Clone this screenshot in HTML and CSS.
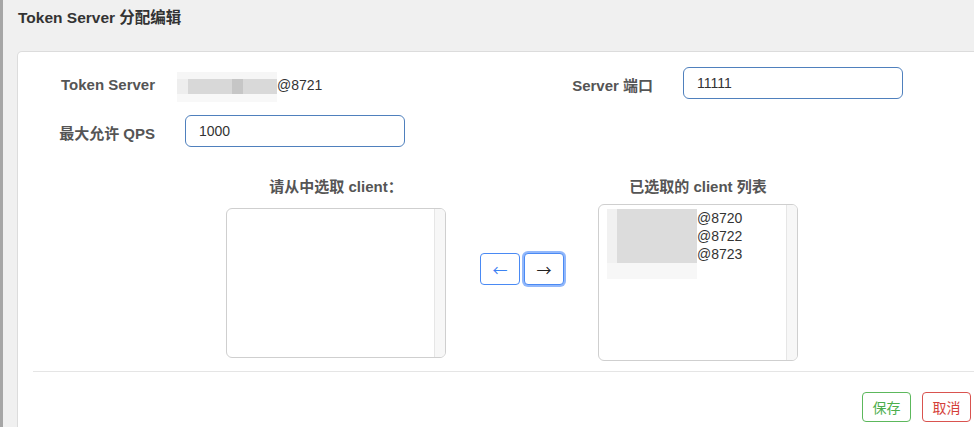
FILE: index.html
```html
<!DOCTYPE html>
<html lang="zh-CN">
<head>
<meta charset="utf-8">
<title>Token Server 分配编辑</title>
<link rel="stylesheet" href="styles.css">
</head>
<body>
<div class="page">
  <div class="header">Token Server 分配编辑</div>
  <div class="card">
    <div class="form">
      <div class="row">
        <div class="half">
          <label class="label">Token Server</label>
          <div class="value"><span class="blur"></span>@8721</div>
        </div>
        <div class="half">
          <label class="label">Server 端口</label>
          <input class="input" type="text" value="11111">
        </div>
      </div>
      <div class="row">
        <div class="half">
          <label class="label">最大允许 QPS</label>
          <input class="input" type="text" value="1000">
        </div>
      </div>
    </div>

    <div class="transfer">
      <div class="col col-left">
        <div class="col-title">请从中选取 client：</div>
        <div class="box box-left">
          <div class="box-body"></div>
          <div class="track"></div>
        </div>
      </div>
      <div class="arrows">
        <button class="arrow arrow-left">←</button>
        <button class="arrow arrow-right">→</button>
      </div>
      <div class="col col-right">
        <div class="col-title">已选取的 client 列表</div>
        <div class="box box-right">
          <ul class="box-body list">
            <li class="item"><span class="mask"></span>@8720</li>
            <li class="item"><span class="mask"></span>@8722</li>
            <li class="item"><span class="mask"></span>@8723</li>
            <li class="mask-tail"></li>
          </ul>
          <div class="track"></div>
        </div>
      </div>
    </div>

    <div class="divider"></div>

    <div class="footer">
      <button class="btn btn-save">保存</button>
      <button class="btn btn-cancel">取消</button>
    </div>
  </div>
</div>
</body>
</html>
```

FILE: styles.css
```css
* { box-sizing: border-box; }

html, body {
  margin: 0;
  padding: 0;
  height: 427px;
  overflow: hidden;
}

body {
  background: #f0f0f0;
  font-family: "Liberation Sans", "Noto Sans CJK SC", sans-serif;
  color: #333;
}

.page {
  border-left: 3px solid #a6a6a6;
  height: 427px;
}

.header {
  height: 36px;
  line-height: 36px;
  padding-left: 15px;
  font-size: 15.5px;
  font-weight: bold;
  color: #333;
}

.card {
  margin-top: 15px;
  margin-left: 14px;
  width: 1000px;
  height: 376px;
  background: #fff;
  border: 1px solid #dcdcdc;
  border-bottom: none;
  border-radius: 5px 5px 0 0;
}

.form {
  padding-top: 15px;
  display: flex;
  flex-direction: column;
  gap: 16px;
}

.row {
  display: flex;
  height: 32px;
  align-items: center;
}

.half {
  width: 498px;
  display: flex;
  align-items: center;
  gap: 30px;
}

.label {
  width: 137px;
  text-align: right;
  font-size: 15px;
  font-weight: bold;
  color: #555;
  padding-top: 2px;
}

.value {
  display: flex;
  align-items: center;
  font-size: 14px;
  color: #333;
  padding-top: 4px;
}

.blur {
  display: inline-block;
  width: 100px;
  height: 30px;
  margin-left: -8px;
  margin-top: 3px;
  background:
    linear-gradient(#f6f6f6 0 7px, transparent 7px 22px, #f8f8f8 22px 30px),
    linear-gradient(to right, #eeeeee 0 11px, #d8d8d8 11px 55px, #c6c6c6 55px 66px, #d9d9d9 66px 100px);
}

.input {
  width: 220px;
  height: 32px;
  border: 1px solid #4f80bd;
  border-radius: 6px;
  padding: 0 13px;
  font-family: "Liberation Sans", "Noto Sans CJK SC", sans-serif;
  font-size: 14px;
  color: #333;
  background: #fff;
  outline: none;
}

.transfer {
  display: flex;
  align-items: flex-start;
  margin-top: 30px;
  padding-left: 208px;
}

.col-title {
  text-align: center;
  font-size: 15px;
  font-weight: bold;
  color: #555;
  line-height: 20px;
  white-space: nowrap;
}

.col-left { width: 220px; }
.col-left .col-title { margin-bottom: 11px; }

.col-right {
  width: 200px;
  margin-left: 34px;
}
.col-right .col-title { margin-bottom: 7px; }

.box {
  display: flex;
  border: 1px solid #cfcfcf;
  border-radius: 6px;
  overflow: hidden;
  background: #fff;
}

.box-left { height: 150px; }
.box-right { height: 157px; }

.box-body {
  flex: 1;
}

.track {
  width: 11px;
  background: #f7f7f7;
  border-left: 1px solid #e6e6e6;
}

.list {
  list-style: none;
  margin: 0;
  padding: 4px 0 0 18px;
  font-size: 14px;
  line-height: 18px;
  color: #333;
}

.item {
  display: flex;
  align-items: flex-start;
  height: 18px;
}

.mask {
  display: inline-block;
  width: 80px;
  height: 18px;
  background: #dcdcdc;
  box-shadow: -10px 0 0 #f1f1f1;
}

.mask-tail {
  width: 90px;
  height: 16px;
  margin-left: -10px;
  background: #f7f7f7;
}

.arrows {
  display: flex;
  gap: 4px;
  margin-left: 34px;
  margin-top: 76px;
}

.arrow {
  width: 40px;
  height: 32px;
  border: 1px solid #4a8af4;
  border-radius: 4px;
  background: #fff;
  font-size: 15px;
  font-family: "Noto Sans CJK SC", sans-serif;
  padding: 0;
  cursor: pointer;
}

.arrow-left { color: #3d82f2; }

.arrow-right {
  color: #222;
  box-shadow: 0 0 0 2px rgba(110, 160, 250, 0.75);
}

.divider {
  margin: 10px 0 0 15px;
  border-top: 1px solid #e5e5e5;
}

.footer {
  display: flex;
  justify-content: flex-end;
  gap: 11px;
  margin-top: 20px;
  padding-right: 45px;
}

.btn {
  width: 49px;
  height: 30px;
  background: #fff;
  border-radius: 4px;
  font-family: "Liberation Sans", "Noto Sans CJK SC", sans-serif;
  font-size: 14px;
  padding: 0;
}

.btn-save {
  border: 1px solid #5cb85c;
  color: #4cae4c;
}

.btn-cancel {
  border: 1px solid #d9534f;
  color: #d43f3a;
}
```
